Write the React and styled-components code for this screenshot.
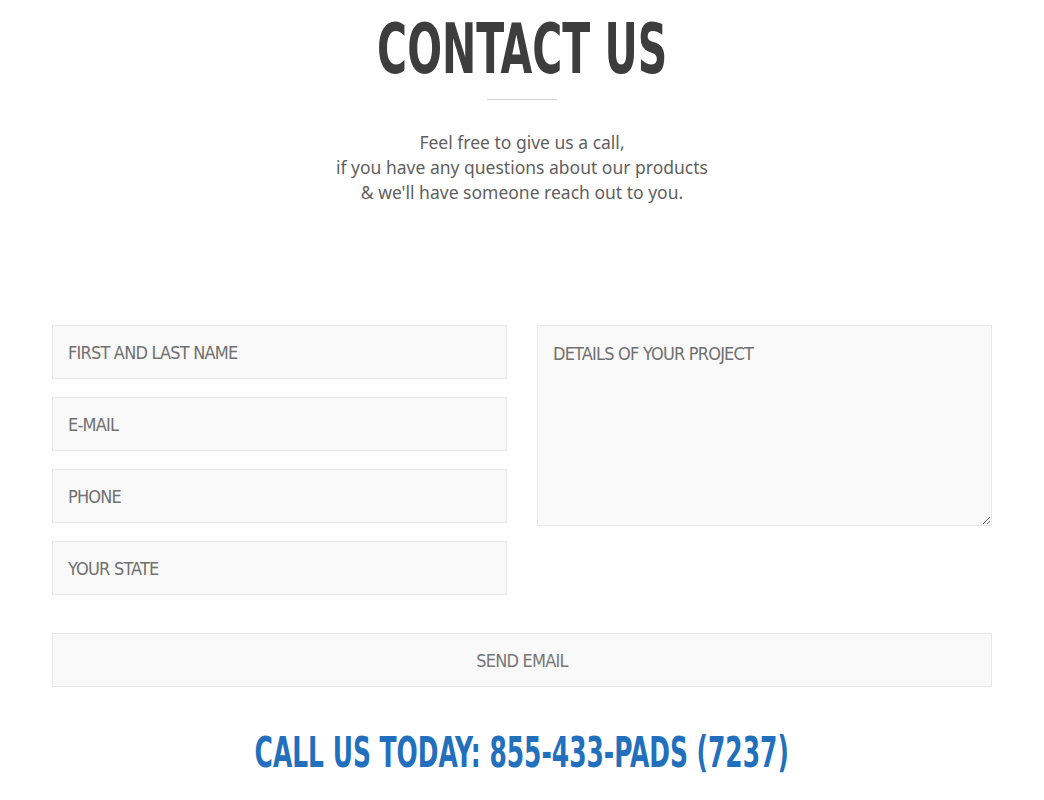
import React from 'react'
import styled, { createGlobalStyle } from 'styled-components'

const Global = createGlobalStyle`
  body {
    margin: 0;
    background: #fff;
    font-family: "DejaVu Sans Condensed", "Liberation Sans Narrow", "Liberation Sans", sans-serif;
  }
  * { box-sizing: border-box; }
`

// no Oswald here, so the condensed DejaVu face is used and squeezed a bit more
const cond = `"DejaVu Sans Condensed", "Liberation Sans Narrow", "Liberation Sans", sans-serif`

const Section = styled.section`
  width: 940px;
  margin: 0 auto;
  padding-top: 14px;
  display: flex;
  flex-direction: column;
  align-items: center;
`

const Squeeze = styled.span`
  display: inline-block;
  white-space: nowrap;
  transform: scaleX(${p => p.$x || 0.65});
  transform-origin: center;
`

const Title = styled.h1`
  margin: 0;
  font-family: ${cond};
  font-weight: 700;
  font-size: 70px;
  line-height: 70px;
  color: #3d3d3d;
`

const Rule = styled.div`
  width: 70px;
  height: 1px;
  background: #cfcfcf;
  margin-top: 15px;
`

const Intro = styled.p`
  margin: 30px 0 0;
  text-align: center;
  font-family: "Noto Sans", "Open Sans", sans-serif;
  font-size: 17.5px;
  line-height: 25px;
  color: #5f5f5f;
`

const Form = styled.form`
  width: 100%;
  margin-top: 120px;
  display: flex;
  flex-direction: column;
`

const Columns = styled.div`
  display: grid;
  grid-template-columns: 1fr 1fr;
  column-gap: 30px;
  align-items: start;
`

const Stack = styled.div`
  display: flex;
  flex-direction: column;
  gap: 18px;
`

const fieldCss = `
  width: 100%;
  background: #f9f9f9;
  border: 1px solid #e8e8e8;
  font-family: ${cond};
  font-size: 18px;
  letter-spacing: -0.8px;
  color: #666;
  padding: 0 15px;
  outline: none;
  &::placeholder { color: #707070; }
`

const Field = styled.input`
  ${fieldCss}
  height: 54px;
`

const Area = styled.textarea`
  ${fieldCss}
  display: block;
  height: 201px;
  padding-top: 17px;
  resize: vertical;
`

const Send = styled.button`
  margin-top: 38px;
  height: 54px;
  width: 100%;
  background: #f9f9f9;
  border: 1px solid #e8e8e8;
  font-family: ${cond};
  font-size: 18px;
  letter-spacing: -0.8px;
  color: #777;
  cursor: pointer;
`

const CallUs = styled.h2`
  margin: 42px 0 0;
  font-family: ${cond};
  font-weight: 700;
  font-size: 42px;
  line-height: 48px;
  color: #2270bd;
`

export default function App() {
  return (
    <>
      <Global />
      <Section>
        <Title><Squeeze>CONTACT US</Squeeze></Title>
        <Rule />
        <Intro>
          Feel free to give us a call,<br />
          if you have any questions about our products<br />
          &amp; we'll have someone reach out to you.
        </Intro>
        <Form onSubmit={e => e.preventDefault()}>
          <Columns>
            <Stack>
              <Field placeholder="FIRST AND LAST NAME" />
              <Field placeholder="E-MAIL" />
              <Field placeholder="PHONE" />
              <Field placeholder="YOUR STATE" />
            </Stack>
            <Area placeholder="DETAILS OF YOUR PROJECT" />
          </Columns>
          <Send type="submit">SEND EMAIL</Send>
        </Form>
        <CallUs><Squeeze $x={0.66}>CALL US TODAY: 855-433-PADS (7237)</Squeeze></CallUs>
      </Section>
    </>
  )
}
